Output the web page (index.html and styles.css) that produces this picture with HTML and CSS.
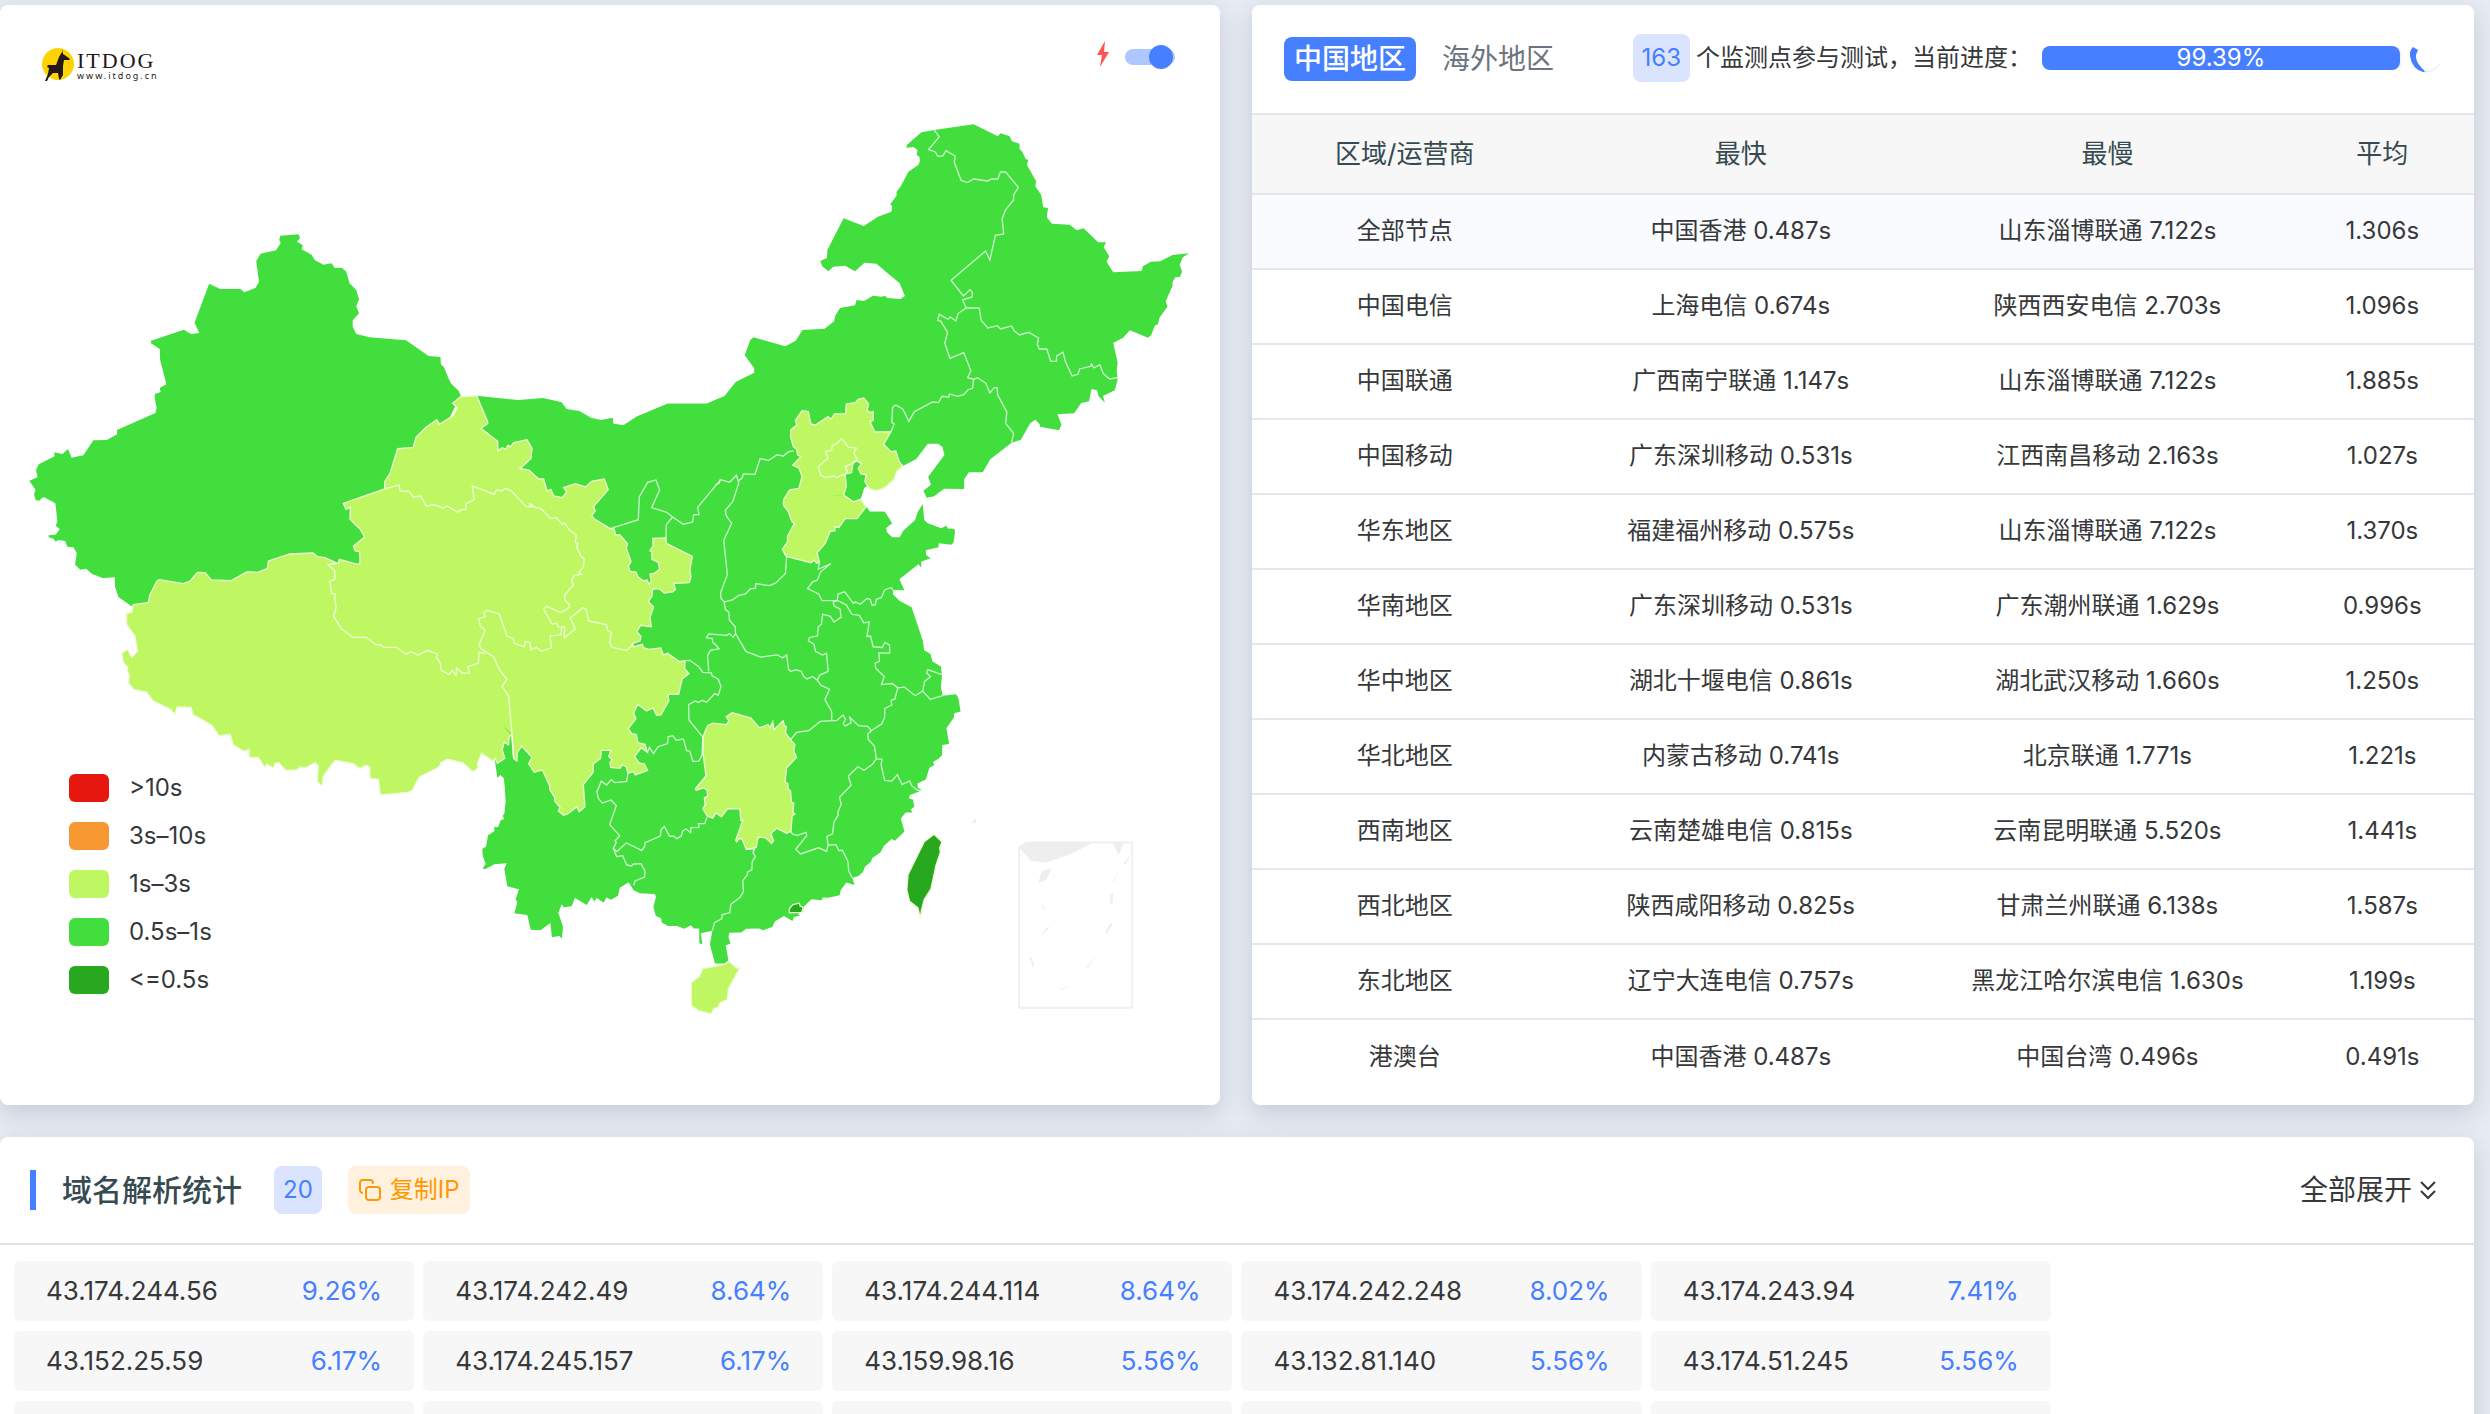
FILE: index.html
```html
<!DOCTYPE html>
<html lang="zh-CN">
<head>
<meta charset="utf-8">
<meta name="viewport" content="width=device-width, initial-scale=1">
<title>ITDOG</title>
<link rel="stylesheet" href="styles.css">
</head>
<body>
<main class="page">
  <div class="columns">
    <section class="card map-card">
      <svg class="map" viewBox="0 0 1220 1100" role="img" aria-label="中国地区测速地图">
        <g transform="translate(0 -5)">
        <g class="level-fast">
          <path transform="scale(.3954 .3333)" d="M709,707 755,703 759,714 751,725 766,736 763,748 788,764 796,780 818,794 838,790 847,804 864,803 876,815 884,850 901,870 908,898 901,919 908,940 892,961 892,980 901,1002 935,1012 1027,1021 1084,1068 1114,1071 1115,1092 1123,1102 1140,1152 1160,1175 1165,1190 1165,1200 1100,1240 500,1240 392,1200 391,1183 408,1176 404,1164 421,1153 405,1080 404,1047 382,1030 382,1022 465,989 483,1002 504,999 492,968 529,851 557,867 608,867 618,877 646,864 655,845 648,784 659,761 698,751 710,729 706,720Z"/>
          <path transform="translate(0 380) scale(.3954 .3333)" d="M421,0 1136,0 1140,10 1160,33 1165,47 1100,200 1000,350 950,560 860,560 380,670 335,680 300,652 291,620 290,592 260,594 233,582 218,566 203,569 190,554 194,520 186,502 170,500 165,483 147,480 141,485 135,476 123,472 123,466 141,464 151,447 141,437 145,424 140,370 112,352 105,354 101,362 90,360 86,343 90,330 74,302 95,292 91,270 98,253 138,229 137,217 158,222 172,207 181,233 211,226 236,181 270,180 296,163 296,150 393,99 396,84 392,58 396,41 407,36 404,26 421,13Z"/>
          <path transform="translate(300 380) scale(.3333)" d="M530,47 655,60 730,54 785,67 800,87 838,93 875,114 905,120 938,114 939,131 970,136 1010,110 1103,71 1220,71 1260,54 1260,1260 620,1260 600,1100Z"/>
          <path transform="translate(600 100) scale(.3954 .3333)" d="M0,961 32,954 34,971 60,977 92,950 171,911 270,911 315,888 343,846 390,818 390,805 366,766 380,720 388,712 469,739 495,722 512,690 568,686 592,664 595,647 607,624 645,616 649,600 668,603 690,587 713,590 720,587 727,594 760,597 771,588 758,550 699,491 669,488 645,514 620,497 590,500 578,514 562,499 557,483 574,474 575,450 616,355 667,378 703,350 737,335 739,318 734,313 750,287 750,275 760,260 780,215 805,195 809,183 808,170 801,165 803,150 793,141 775,143 776,135 813,97 845,90 945,73 1006,109 1013,100 1036,109 1042,124 1061,131 1061,147 1068,155 1077,178 1083,179 1080,195 1100,238 1103,243 1101,259 1116,285 1121,322 1133,324 1130,352 1143,371 1188,374 1206,391 1223,385 1260,427 1280,427 1274,442 1288,469 1281,485 1298,517 1370,513 1373,499 1393,485 1417,484 1448,465 1490,460 1474,472 1466,494 1472,515 1467,530 1455,532 1448,545 1448,557 1431,603 1435,620 1415,653 1411,673 1403,677 1394,706 1386,713 1340,691 1323,713 1298,729 1309,787 1307,812 1309,840 1302,871 1272,888 1277,908 1261,889 1257,871 1243,867 1237,904 1217,909 1199,940 1157,943 1167,974 1161,991 1113,980 1112,973 1101,959 1088,970 1064,1020 1041,1028 987,1078 968,1117 933,1117 921,1138 921,1167 870,1166 845,1189 826,1193 818,1172 837,1154 830,1130 871,1065 866,1041 855,1031 829,1031 800,1077 766,1098 750,1115 744,1138 720,1163 701,1172 684,1168 676,1157 668,1163 659,1197 673,1219 682,1235 720,1235 733,1260 0,1260Z"/>
          <path transform="translate(600 480) scale(.3954 .3571)" d="M0,0 676,0 678,13 668,22 659,54 673,75 682,89 720,89 739,121 724,134 725,145 739,160 758,160 767,142 797,112 803,91 816,67 820,112 829,121 863,135 876,128 880,136 896,137 898,145 894,176 888,181 857,177 856,188 824,197 825,210 836,219 812,229 813,245 805,236 757,278 770,309 741,308 741,320 757,338 788,356 816,448 820,477 836,487 841,508 862,522 865,548 862,580 867,604 900,600 906,609 912,648 896,653 895,665 876,695 883,739 866,742 865,770 857,780 842,790 846,798 833,806 824,839 803,850 804,862 815,869 783,883 782,892 791,895 795,915 786,922 790,931 773,931 761,948 770,984 746,1010 737,1005 718,1025 709,1043 688,1059 686,1068 670,1083 665,1098 654,1109 638,1114 644,1134 623,1127 609,1148 606,1163 577,1170 563,1169 561,1177 535,1174 516,1194 513,1210 500,1215 506,1220 490,1224 487,1235 465,1221 442,1236 436,1252 412,1261 402,1256 370,1257 357,1267 327,1268 325,1280 330,1299 318,1303 325,1347 314,1354 291,1354 278,1301 284,1262 255,1269 259,1300 251,1297 251,1256 237,1256 230,1247 213,1257 195,1249 172,1249 156,1239 155,1228 141,1220 135,1195 142,1166 138,1159 101,1157 85,1149 72,1126 50,1142 45,1163 26,1174 17,1167 8,1183 0,1176Z"/>
          <path transform="translate(470 740) scale(.3333)" d="M73,50 82,113 91,105 103,116 107,185 103,222 98,227 102,237 92,241 84,262 73,260 73,274 54,286 48,320 37,326 38,346 47,372 38,385 45,388 73,373 110,370 103,387 112,439 147,448 137,478 142,487 133,520 172,525 182,569 212,571 241,549 246,592 267,588 276,595 279,560 265,518 275,493 281,502 305,499 315,474 350,495 365,471 374,485 379,474 402,487 409,472 423,479 444,467 448,444 475,427 491,436 491,450 550,461 550,0 125,-20 100,0Z"/>
        </g>
        <g class="level-mid">
          <path class="plain" transform="translate(300 380) scale(.3333)" d="M160,560 620,1040 560,1060 110,660Z"/>
          <path transform="translate(0 380) scale(.3954 .3333)" d="M1294,1065 1288,1070 1286,1095 1275,1087 1270,1110 1277,1135 1258,1150 1252,1135 1248,1145 1218,1120 1207,1153 1210,1162 1197,1176 1170,1148 1131,1138 1115,1148 1110,1161 1060,1192 1043,1231 1032,1237 962,1245 957,1198 936,1195 935,1160 925,1156 910,1166 893,1151 848,1141 838,1155 817,1190 816,1212 812,1217 802,1203 805,1157 797,1148 771,1164 759,1161 750,1170 722,1171 705,1148 695,1150 692,1165 675,1152 671,1164 653,1132 630,1133 630,1108 617,1114 590,1095 582,1063 554,1068 537,1037 488,1003 483,982 448,981 442,1004 432,988 388,963 370,936 338,928 325,909 327,886 322,873 323,862 312,847 308,820 323,808 333,832 348,814 341,767 320,733 320,701 333,697 337,674 375,668 379,645 397,603 403,599 463,611 480,604 499,577 519,578 534,600 585,602 624,576 652,577 676,566 679,543 733,522 792,519 803,530 822,533 848,547"/>
          <path transform="translate(300 380) scale(.3333)" d="M100,549 115,550 118,538 172,553 180,549 179,516 165,512 160,499 194,471 180,447 150,418 151,382 138,388 130,370 254,327 254,305 270,280 293,206 340,202 348,172 378,142 411,119 418,133 460,107 472,84 458,70 482,50 530,47 563,125 563,131 543,145 593,184 594,212 606,203 618,207 624,196 632,200 641,188 681,179 696,205 693,235 660,266 687,270 716,297 731,297 741,333 753,328 761,348 787,353 800,336 791,323 825,311 857,321 875,304 913,297 925,329 881,379 886,393 876,405 881,416 931,446 943,447 946,464 960,465 983,492 979,505 993,545 985,558 990,574 1008,576 1014,590 1030,603 1041,600 1047,612 1054,605 1050,582 1063,580 1079,568 1075,547 1056,538 1056,515 1050,513 1060,497 1058,475 1098,474 1099,490 1177,529 1170,570 1173,590 1168,608 1122,610 1126,629 1118,636 1093,639 1078,626 1058,627 1056,648 1045,665 1061,681 1050,712 1054,740 1022,736 1010,755 1023,769 1020,783 997,790 1001,801 1027,793 1031,803 1046,808 1083,804 1090,825 1103,820 1138,845 1155,842 1154,866 1167,881 1147,896 1136,943 1106,943 1104,950 1107,961 1083,1005 1070,1006 1059,984 1040,993 1013,973 1001,1000 1008,1016 985,1046 995,1061 1009,1064 1014,1088 1035,1093 1042,1117 1024,1103 1004,1130 1017,1149 1033,1152 1043,1171 1006,1185 1001,1175 984,1180 979,1160 967,1154 960,1165 932,1162 930,1148 937,1139 926,1130 933,1111 904,1111 902,1135 880,1152 879,1178 850,1214 855,1280 838,1295 830,1281 803,1302 791,1306 775,1293 780,1282 764,1263 764,1252 750,1230 749,1217 727,1170 703,1177 686,1151 696,1132 665,1098 652,1118 651,1143 641,1135 635,1062"/>
          <path class="plain" transform="translate(600 100) scale(.3954 .3333)" d="M464,1200 480,1170 503,1165 520,1180 616,1190 641,1205 640,1240 480,1240 464,1216Z"/>
          <path transform="translate(600 100) scale(.3954 .3333)" d="M464,1200 480,1170 503,1165 511,1130 503,1104 487,1096 508,1070 500,1065 497,1048 489,1040 482,1011 482,990 498,975 494,961 511,932 527,935 533,972 545,975 577,950 584,958 593,942 621,942 623,912 645,908 653,898 667,894 679,911 676,930 681,937 691,935 691,961 683,965 695,996 736,995 717,1033 736,1055 748,1053 757,1086 766,1098 750,1115 744,1138 720,1163 701,1172 684,1168 676,1157 670,1145 673,1124 660,1122 653,1105 661,1092 650,1082 640,1090 636,1118 620,1122 623,1160 616,1185"/>
          <path transform="translate(600 480) scale(.3954 .3571)" d="M616,42 641,61 659,54 673,75 650,108 620,108 604,133 594,131 594,142 582,144 570,177 549,204 555,229 548,233 541,224 534,232 471,214 461,194 474,174 474,157 492,121 486,118 476,88 464,71 464,56"/>
          <path transform="translate(600 480) scale(.3954 .3571)" d="M319,663 334,652 382,667 403,694 425,685 430,694 437,677 440,699 463,674 467,690 471,690 469,708 482,727 493,741 490,758 497,777 472,806 468,845 475,850 476,865 482,871 484,902 490,905 488,931 493,935 486,940 483,984 472,989 447,975 432,990 439,1010 434,1018 419,1002 400,1000 395,1029 370,1034 359,1005 352,1004 346,1013 343,1010 361,953 356,953 354,921 323,920 307,943 293,932 285,947 271,941 260,920 266,910 264,890 272,885 271,868 262,862 243,869 241,865 268,829 261,770 260,720 272,688 285,681 320,685 326,674Z"/>
          <path transform="translate(600 480) scale(.3954 .3571)" d="M260,1368 318,1356 325,1347 346,1367 354,1366 325,1424 322,1455 304,1464 297,1478 289,1479 281,1495 249,1486 231,1472 231,1408 252,1389Z"/>
        </g>
        <g class="level-best" transform="translate(600 480) scale(.3954 .3571)">
          <path d="M845,992 865,1014 859,1030 861,1042 850,1078 837,1145 820,1175 813,1205 810,1227 804,1198 783,1180 776,1148 779,1105 820,1013Z"/>
          <path d="M479,1200 488,1189 504,1185 506,1193 514,1197 510,1211 479,1212Z"/>
        </g>
        <g class="border" transform="translate(300 380) scale(.3333)">
          <path d="M254,327 298,315 300,333 327,334 340,351 362,348 379,378 403,374 429,384 442,378 474,397 484,389 498,389 497,372 523,359 517,318 583,343 590,329 606,333 616,325 635,333 677,379 695,380 688,370 707,383 723,386 752,416 769,413 788,434 794,429 808,450 829,465 826,487 834,490 830,501 843,529 853,537 850,562 836,577 844,583 824,586 815,600 820,615 794,645 795,660 809,675 806,684 782,698 740,679 731,688 757,733 770,729 774,741 785,742 783,765 750,768 755,803 724,814 709,802 693,810 690,788 675,785 673,800 643,790 640,776 621,768 598,702 561,691 551,700 556,710 536,717 541,739 556,750 537,795 543,806 582,832 598,869 621,898 606,919 626,949 636,1062 641,1135"/>
          <path d="M785,742 794,740 793,774 826,747 811,714 849,683 859,690 866,723 918,734 924,752 933,757 930,790 937,802 980,811 991,801 1001,790"/>
          <path d="M118,549 84,555 104,571 105,598 89,604 95,640 107,643 104,655 109,680 101,709 125,747 159,772 199,772 229,795 242,794 250,802 289,802 319,823 333,815 354,825 383,811 412,822 409,832 420,847 424,872 448,883 456,871 468,886 470,864 488,880 508,879 503,860 535,850 537,817 556,820"/>
          <path d="M931,446 1015,419 1018,351 1043,307 1068,300 1079,329 1055,383 1100,397 1118,411 1150,433 1178,426 1181,404 1197,404 1193,382 1247,317 1262,301M1118,411 1099,434 1098,474"/>
        </g>
        <g class="border" transform="translate(600 480) scale(.3954 .3571)">
          <path d="M216,506 227,505 249,522 260,539 282,540 283,548 299,558 306,579 299,603 290,598 270,622 258,617 249,623 241,619 224,629 225,672 260,720"/>
          <path d="M275,536 272,492 279,477 301,473 291,459 285,455 284,444 269,442 275,431 321,435 327,430 337,440 343,431"/>
          <path d="M351,8 336,60 317,85 319,100 333,121 313,169 322,265 305,316 306,332 314,341 317,363 326,370 327,392 342,411 343,431 369,480 406,496 448,490 462,498 472,490 477,531 483,536 495,531 509,536 516,552 524,557 538,550 550,561 555,547 577,536 573,485 563,490 545,480 541,460 527,450 530,441 550,437 552,412 560,404 563,376 582,381 592,398 610,384 607,361 592,353 590,341 602,338 623,350 637,376 656,379 667,400 681,398 675,438 684,437 691,467 714,469 720,455 732,462 733,485 705,484 707,508 696,513 697,527 719,550 712,573 739,570 753,582 770,580 797,604 816,591 835,614 867,604"/>
          <path d="M314,341 335,336 350,324 368,319 380,305 393,303 394,290 428,296 444,289 469,262 472,215"/>
          <path d="M555,229 552,250 584,234 558,257 550,280 538,285 525,304 553,319 562,338 600,337 602,319 619,313 641,346 645,341 658,348 675,332 683,334 688,350 696,350 699,334 712,329 720,308 736,301 741,308"/>
          <path d="M816,591 821,564 836,551 826,540 829,531 865,545"/>
          <path d="M550,561 558,574 580,586 569,615 586,649 586,674 557,676 528,702 497,707 482,727M586,674 598,674 615,658 621,670 615,682 620,689 635,680 632,665 654,688 677,690 686,702 713,683 720,664 720,640 738,630 736,617 746,613 753,582"/>
          <path d="M686,702 677,712 679,727 694,745 699,781 689,796 668,813 652,803 628,829 635,855 606,888 610,908 601,932 603,938 592,957 588,991 574,998 577,1022 597,1021 604,1038 613,1037 627,1068 629,1095 638,1114"/>
          <path d="M699,781 713,782 711,798 720,841 738,843 752,825 764,853 783,843 789,857 803,869 815,869"/>
          <path d="M483,984 487,992 500,995 521,987 523,996 495,1034 507,1047 553,1030 573,1040 577,1022"/>
          <path d="M370,1034 391,1033 387,1043 393,1055 385,1068 384,1092 373,1098 373,1105 361,1122 363,1152 355,1168 331,1188 328,1212 309,1217 308,1229 290,1239 284,1262"/>
          <path d="M120,763 125,748 135,766 147,747 171,738 172,719 184,716 193,729 211,725 219,758 227,760 235,788 250,787 258,770 260,720"/>
        </g>
        <g class="border" transform="translate(470 740) scale(.3333)">
          <path d="M474,100 470,124 435,128 424,119 410,135 394,123 381,155 385,175 397,189 423,180 439,197 419,254 449,287 435,303 439,307 430,325 440,335 469,309 515,331 524,320 525,308 571,288 573,270 583,259 599,289 610,288 620,296 634,288 638,273 648,267 662,278 663,263 687,262 685,251 704,251 711,232"/>
          <path d="M430,325 440,350 458,347 470,375 485,378 490,372 513,371 525,393 524,411 495,423 491,436"/>
        </g>
        <g class="border" transform="translate(600 100) scale(.3954 .3333)">
          <path d="M490,1053 477,1055 464,1068 447,1065 427,1081 405,1076 392,1123 363,1122 359,1135 349,1143M351,1149 345,1126 328,1147 304,1139 301,1150 291,1155"/>
          <path d="M845,90 858,110 831,149 848,156 855,169 867,168 875,152 898,168 896,187 913,241 929,248 945,237 980,243 990,237 1006,237 1013,216 1026,216 1058,262 1046,285 1046,300 1026,329 1017,356 1021,402 1000,406 986,480 975,453 888,541 919,588 936,569 942,578 941,591 917,600 926,624 906,640 900,663 886,651 880,658 858,643 854,661 862,664 879,697 872,730 885,775 920,758 938,812 930,833 945,838 942,865 930,870 920,884 904,889 884,882 882,891 865,889 856,908 841,906 795,935 781,964 766,928 748,915 740,922 738,967 744,972 736,995"/>
          <path d="M926,624 959,624 964,661 981,684 1005,677 1013,687 1041,678 1048,693 1061,705 1084,697 1109,714 1106,733 1111,747 1130,747 1140,784 1154,784 1155,768 1171,757 1177,785 1194,828 1209,823 1213,807 1241,799 1243,792 1249,804 1264,794 1273,821 1289,837 1309,833"/>
          <path d="M945,838 955,833 976,850 986,879 997,863 1004,863 1006,886 1029,936 1026,970 1046,1000 1041,1028"/>
          <path d="M600,1030 611,1016 629,1042 648,1044 642,1058 650,1078 636,1092 620,1100 625,1112 619,1125 606,1127 600,1134 592,1128 571,1133 558,1125 552,1100 577,1074 570,1055 586,1050 587,1037Z"/>
        </g>
        <g class="inset" transform="translate(600 480) scale(.3954 .3571)">
          <path class="inset-frame" d="M1078,1015 1346,1015 1346,1478 1060,1478 1060,1030Z"/>
          <path d="M1060,1030 1078,1015 1248,1015 1192,1047 1128,1071 1090,1067ZM1295,1015 1324,1015 1312,1050ZM1117,1095 1142,1087 1129,1120 1109,1128ZM1343,1047 1330,1076 1324,1074ZM1311,1100 1298,1126 1296,1123ZM1291,1159 1298,1157 1296,1187 1290,1185ZM1115,1175 1125,1204 1121,1204ZM1138,1252 1115,1280 1128,1254ZM1289,1244 1297,1242 1283,1270 1278,1268ZM1087,1338 1093,1337 1098,1363 1094,1364ZM1257,1326 1235,1365 1229,1367ZM1193,1414 1166,1428 1164,1425ZM951,947 951,960 938,960Z"/>
        </g>
        </g>
      </svg>
      <div class="map-top">
        <div class="logo">
          <svg width="32" height="34" viewBox="0 0 32 34" aria-hidden="true">
            <ellipse cx="16" cy="17" rx="16" ry="16" fill="#fdd303"/>
            <path d="M20 2l1 5 3 2 4 3-1 1h-5l-1 6v9l-3 5-1-1-1-6-5 0-4 4-2 4-2 0 3-7 1-6-2-1 1-2h8l3-8 3-5z" fill="#231815"/>
          </svg>
          <div class="wordmark">
            <span class="wordmark-name">ITDOG</span>
            <span class="wordmark-url">www.itdog.cn</span>
          </div>
        </div>
        <label class="switch">
          <svg width="14" height="26" viewBox="0 0 14 26" role="img" aria-label="极速模式"><path d="M9 0L1 14h5L4 26l9-15H8z" fill="#ff5252"/></svg>
          <input type="checkbox" checked>
        </label>
      </div>
      <ul class="legend">
        <li><i class="swatch swatch-red"></i>&gt;10s</li>
        <li><i class="swatch swatch-orange"></i>3s–10s</li>
        <li><i class="swatch swatch-lime"></i>1s–3s</li>
        <li><i class="swatch swatch-green"></i>0.5s–1s</li>
        <li><i class="swatch swatch-dark"></i>&lt;=0.5s</li>
      </ul>
    </section>

    <section class="card stats-card">
      <header class="stats-head">
        <button class="tab tab-active" type="button">中国地区</button>
        <button class="tab" type="button">海外地区</button>
        <div class="status">
          <span class="badge">163</span>
          <span class="status-text">个监测点参与测试，当前进度：</span>
          <div class="progress" role="progressbar" aria-valuenow="99.39" aria-valuemin="0" aria-valuemax="100" aria-label="当前进度">
            <div class="progress-fill" style="width:99.39%">99.39%</div>
          </div>
          <svg class="spinner" width="32" height="32" viewBox="0 0 32 32" aria-hidden="true">
            <path d="M3 5Q-1 9 0 14Q2 27 13 30L16 30Q5 21 6 13L8 8Z" fill="#467fff"/>
            <path d="M14 30Q24 30 30 22" fill="none" stroke="#dbe4ff" stroke-width="1"/>
          </svg>
        </div>
      </header>
      <table class="stats">
        <colgroup><col class="col-area"><col class="col-node"><col class="col-node"><col class="col-avg"></colgroup>
        <thead><tr><th scope="col">区域/运营商</th><th scope="col">最快</th><th scope="col">最慢</th><th scope="col">平均</th></tr></thead>
        <tbody>
          <tr class="current"><td>全部节点</td><td>中国香港 0.487s</td><td>山东淄博联通 7.122s</td><td>1.306s</td></tr>
          <tr><td>中国电信</td><td>上海电信 0.674s</td><td>陕西西安电信 2.703s</td><td>1.096s</td></tr>
          <tr><td>中国联通</td><td>广西南宁联通 1.147s</td><td>山东淄博联通 7.122s</td><td>1.885s</td></tr>
          <tr><td>中国移动</td><td>广东深圳移动 0.531s</td><td>江西南昌移动 2.163s</td><td>1.027s</td></tr>
          <tr><td>华东地区</td><td>福建福州移动 0.575s</td><td>山东淄博联通 7.122s</td><td>1.370s</td></tr>
          <tr><td>华南地区</td><td>广东深圳移动 0.531s</td><td>广东潮州联通 1.629s</td><td>0.996s</td></tr>
          <tr><td>华中地区</td><td>湖北十堰电信 0.861s</td><td>湖北武汉移动 1.660s</td><td>1.250s</td></tr>
          <tr><td>华北地区</td><td>内蒙古移动 0.741s</td><td>北京联通 1.771s</td><td>1.221s</td></tr>
          <tr><td>西南地区</td><td>云南楚雄电信 0.815s</td><td>云南昆明联通 5.520s</td><td>1.441s</td></tr>
          <tr><td>西北地区</td><td>陕西咸阳移动 0.825s</td><td>甘肃兰州联通 6.138s</td><td>1.587s</td></tr>
          <tr><td>东北地区</td><td>辽宁大连电信 0.757s</td><td>黑龙江哈尔滨电信 1.630s</td><td>1.199s</td></tr>
          <tr><td>港澳台</td><td>中国香港 0.487s</td><td>中国台湾 0.496s</td><td>0.491s</td></tr>
        </tbody>
      </table>
    </section>
  </div>

  <section class="card dns-card">
    <header class="dns-head">
      <h2>域名解析统计</h2>
      <span class="badge">20</span>
      <button class="copy" type="button">
        <svg width="24" height="24" viewBox="0 0 24 24" fill="none" stroke="currentColor" stroke-width="2" stroke-linecap="round" aria-hidden="true"><rect x="8" y="9" width="14" height="13" rx="3"/><path d="M4 15q-2-1-2-3V5q0-3 3-3h7q3 0 3 3"/></svg>
        复制IP
      </button>
      <button class="expand" type="button">
        全部展开
        <svg width="16" height="20" viewBox="0 0 16 20" fill="none" stroke="currentColor" stroke-width="2" aria-hidden="true"><path d="M1 2l7 7 7-7M1 11l7 7 7-7"/></svg>
      </button>
    </header>
    <ul class="ips">
      <li><span>43.174.244.56</span><b>9.26%</b></li>
      <li><span>43.174.242.49</span><b>8.64%</b></li>
      <li><span>43.174.244.114</span><b>8.64%</b></li>
      <li><span>43.174.242.248</span><b>8.02%</b></li>
      <li><span>43.174.243.94</span><b>7.41%</b></li>
      <li><span>43.152.25.59</span><b>6.17%</b></li>
      <li><span>43.174.245.157</span><b>6.17%</b></li>
      <li><span>43.159.98.16</span><b>5.56%</b></li>
      <li><span>43.132.81.140</span><b>5.56%</b></li>
      <li><span>43.174.51.245</span><b>5.56%</b></li>
      <li></li>
      <li></li>
      <li></li>
      <li></li>
      <li></li>
    </ul>
  </section>
</main>
</body>
</html>
```
FILE: styles.css
```css
* {
  box-sizing: border-box;
}

body {
  margin: 0;
  height: 100vh;
  overflow: hidden;
  background: #e7ebf3;
  color: #36383a;
  font: 24px/36px Inter, "Noto Sans CJK SC", sans-serif;
}

button {
  border: 0;
  background: none;
  color: inherit;
  font: inherit;
  white-space: nowrap;
}

ul {
  margin: 0;
  padding: 0;
  list-style: none;
}

.page {
  display: grid;
  gap: 32px;
  padding: 5px 16px 0 0;
}

.columns {
  display: grid;
  grid-template-columns: 1220fr 1222fr;
  gap: 32px;
}

.card {
  border-radius: 8px;
  background: #fff;
  box-shadow: 0 8px 24px rgba(60, 75, 100, .2);
}

/* Map */
.map-card {
  display: grid;
}

.map-card > * {
  grid-area: 1 / 1;
}

.map {
  display: block;
  width: 100%;
}

.level-fast {
  fill: #42de3e;
}

.level-mid {
  fill: #bff763;
  stroke: #eefbd6;
}

.level-best {
  fill: #28a81f;
  stroke: #eefbd6;
}

.level-mid path,
.level-best path {
  stroke-width: 1.3;
  vector-effect: non-scaling-stroke;
}

.level-mid .plain {
  stroke: none;
}

.border {
  fill: none;
  stroke: rgba(255, 255, 255, .75);
}

.border path {
  stroke-width: 1.3;
  vector-effect: non-scaling-stroke;
}

.inset {
  fill: #eee;
}

.inset-frame {
  fill: none;
  stroke: #f0f0f0;
  stroke-width: 2;
  vector-effect: non-scaling-stroke;
}

.map-top {
  display: flex;
  align-self: start;
  justify-content: space-between;
  padding: 36px 45px 0 42px;
}

.logo {
  display: flex;
  gap: 3px;
  padding-top: 6px;
}

.wordmark {
  display: flex;
  flex-direction: column;
  padding-top: 4px;
  color: #231815;
}

.wordmark-name {
  font: 22px/20px "Liberation Serif", serif;
  letter-spacing: 2px;
}

.wordmark-url {
  font: 9px/10px "Noto Sans", sans-serif;
  letter-spacing: 2px;
}

.switch {
  display: flex;
  align-items: center;
  align-self: start;
  gap: 15px;
}

.switch input {
  display: flex;
  align-items: center;
  justify-content: flex-end;
  width: 50px;
  height: 16px;
  margin: 6px 0 0;
  padding-right: 2px;
  border-radius: 8px;
  appearance: none;
  background: #aec7ff;
}

.switch input::before {
  width: 24px;
  height: 24px;
  border-radius: 50%;
  background: #467fff;
  content: "";
}

.legend {
  display: grid;
  align-self: end;
  justify-self: start;
  gap: 12px;
  padding: 0 0 107px 69px;
}

.legend li {
  display: flex;
  align-items: center;
  gap: 20px;
}

.swatch {
  width: 40px;
  height: 28px;
  border-radius: 6px;
}

.swatch-red { background: #e6170e; }
.swatch-orange { background: #f79833; }
.swatch-lime { background: #bff763; }
.swatch-green { background: #42de3e; }
.swatch-dark { background: #28a81f; }

/* Region statistics */
.stats-head {
  display: flex;
  align-items: center;
  gap: 16px;
  height: 110px;
  padding: 0 32px;
  border-bottom: 2px solid #e2e8ee;
}

.tab {
  height: 44px;
  padding: 0 10px;
  border-radius: 8px;
  color: #6c757d;
  font-size: 28px;
  line-height: 40px;
}

.tab-active {
  background: #467fff;
  color: #fff;
  font-weight: 500;
}

.status {
  display: flex;
  align-items: center;
  margin-left: auto;
  padding-bottom: 2px;
}

.status-text {
  padding: 0 10px 0 6px;
  white-space: nowrap;
}

.badge {
  height: 48px;
  padding: 0 9px;
  border-radius: 8px;
  background: #dbe4ff;
  color: #467fff;
  line-height: 48px;
}

.progress {
  width: 360px;
  height: 24px;
  border-radius: 8px;
  background: #f3f5f9;
}

.progress-fill {
  height: 24px;
  border-radius: 8px;
  background: #467fff;
  color: #fff;
  line-height: 24px;
  text-align: center;
}

.spinner {
  margin-left: 8px;
}

.stats {
  width: 100%;
  margin-bottom: 10px;
  border-spacing: 0;
  table-layout: fixed;
  text-align: center;
}

.col-area { width: 25%; }
.col-node { width: 30%; }
.col-avg { width: 15%; }

.stats th,
.stats td {
  height: 75px;
  padding: 0 0 2px;
  border-bottom: 2px solid #e2e8ee;
  font-weight: 400;
}

.stats th {
  height: 80px;
  padding: 0;
  background: #f7f7f7;
  color: #364a50;
  font-size: 26px;
}

.stats .current {
  background: #fafbff;
}

.stats tbody tr:last-child td {
  border-bottom: 0;
}

/* Resolved addresses */
.dns-head {
  display: flex;
  align-items: center;
  height: 108px;
  padding: 0 38px 0 30px;
  border-bottom: 2px solid #dfe2e6;
}

.dns-head h2 {
  margin: 0 32px 0 0;
  padding-left: 26px;
  border-left: 6px solid #467fff;
  color: #364a50;
  font-size: 30px;
  font-weight: 500;
  line-height: 40px;
}

.copy {
  display: flex;
  align-items: center;
  gap: 8px;
  height: 48px;
  margin-left: 26px;
  padding: 0 10px;
  border-radius: 8px;
  background: #fff1de;
  color: #ff9800;
}

.expand {
  display: flex;
  align-items: center;
  gap: 8px;
  margin-left: auto;
  padding: 0;
  font-size: 28px;
}

.ips {
  display: grid;
  grid-template-columns: repeat(6, 1fr);
  gap: 10px 9px;
  padding: 16px 14px;
}

.ips li {
  display: flex;
  align-items: center;
  justify-content: space-between;
  height: 60px;
  padding: 0 32px;
  border-radius: 6px;
  background: #f7f7f7;
  font-size: 26px;
}

.ips li:nth-child(5n + 1) {
  grid-column: 1;
}

.ips b {
  color: #467fff;
  font-weight: 400;
}
```
